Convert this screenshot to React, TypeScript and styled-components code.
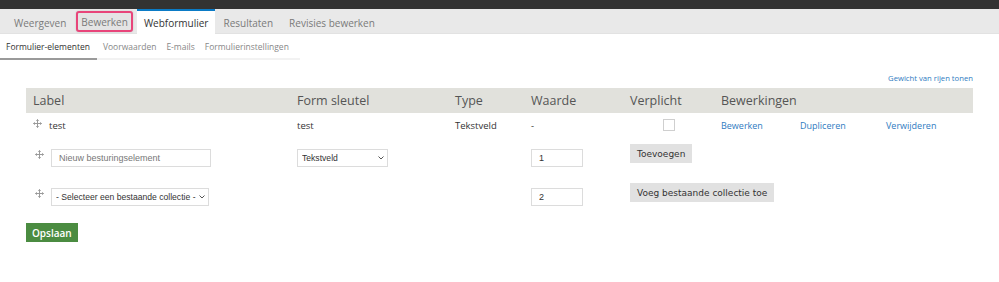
import React, { FC } from 'react';
import styled, { createGlobalStyle } from 'styled-components';

const GlobalStyle = createGlobalStyle`
  body {
    margin: 0;
    background: #fff;
    font-family: 'Open Sans', 'Liberation Sans', sans-serif;
    color: #333;
  }
`;

const TopBar = styled.div`
  height: 9px;
  background: #333;
`;

const TabBar = styled.nav`
  display: flex;
  align-items: stretch;
  height: 25px;
  padding-left: 6px;
  background: #e9e9e9;
  border-bottom: 1px solid #e2e2e2;
  box-sizing: border-box;
`;

const Tab = styled.div<{ $active?: boolean; $marked?: boolean }>`
  display: flex;
  align-items: center;
  padding: 0 ${(p) => (p.$active ? '7px' : '8px')};
  font-size: 10px;
  white-space: nowrap;
  color: ${(p) => (p.$active ? '#333' : '#7a7a7a')};
  background: ${(p) => (p.$active ? '#fff' : 'transparent')};
  border-top: 2px solid ${(p) => (p.$active ? '#0b7bc6' : 'transparent')};
  margin-bottom: -1px;
  box-sizing: border-box;
  ${(p) =>
    p.$marked &&
    `
    margin: 2px 4px 1px 2px;
    padding: 0 3px;
    border: 2px solid #e8457a;
    border-radius: 3px;
    background: #e4e4e4;
    box-shadow: 0 0 2px rgba(0,0,0,0.15);
  `}
`;

const SubTabs = styled.nav`
  display: flex;
  width: 300px;
  height: 26px;
  border-bottom: 2px solid #f2f2f2;
  box-sizing: border-box;
`;

const SubTab = styled.div<{ $active?: boolean }>`
  display: flex;
  align-items: center;
  flex-shrink: 0;
  white-space: nowrap;
  padding: 0 ${(p) => (p.$active ? '7px 0 6px' : '4px 0 6px')};
  font-size: 8.5px;
  color: ${(p) => (p.$active ? '#333' : '#888')};
  ${(p) => p.$active && `border-bottom: 2px solid #9a9a9a; margin-bottom: -2px;`}
`;

const Content = styled.main`
  padding: 0 26px;
`;

const LinkRow = styled.div`
  display: flex;
  justify-content: flex-end;
  padding-top: 13px;
  height: 28px;
  box-sizing: border-box;
`;

const Link = styled.a`
  color: #2f7bc1;
  font-size: 9px;
  text-decoration: none;
  cursor: pointer;
`;

const SmallLink = styled(Link)`
  font-size: 7.7px;
`;

const Table = styled.table`
  width: 100%;
  border-collapse: collapse;
  table-layout: fixed;
`;

const HeadCell = styled.th`
  height: 25px;
  padding: 0 7px;
  background: #e1e1dc;
  font-size: 12.5px;
  font-weight: 400;
  color: #555;
  text-align: left;
`;

const Cell = styled.td<{ $top?: number; $center?: boolean }>`
  padding: ${(p) => (p.$top ?? 6)}px 7px 0 7px;
  height: ${(p) => (p.$top ? 38 : 26)}px;
  vertical-align: top;
  font-size: 9.5px;
  color: #333;
  text-align: ${(p) => (p.$center ? 'center' : 'left')};
  box-sizing: border-box;
`;

const LabelWrap = styled.div`
  display: flex;
  align-items: flex-start;
  gap: 7px;
`;

const Handle = styled.span<{ $top?: number }>`
  display: inline-flex;
  margin-top: ${(p) => p.$top ?? 2}px;
  margin-left: 2px;
`;

const Checkbox = styled.span`
  display: inline-block;
  width: 12px;
  height: 12px;
  border: 1px solid #cfcfcf;
  box-sizing: border-box;
`;

const TextInput = styled.input<{ $width: number }>`
  width: ${(p) => p.$width}px;
  height: 18px;
  padding: 0 7px;
  border: 1px solid #dcdcdc;
  box-sizing: border-box;
  font-family: 'Liberation Sans', Arial, sans-serif;
  font-size: 9px;
  color: #333;
  &::placeholder {
    color: #777;
  }
`;

const SelectWrap = styled.div<{ $width: number }>`
  position: relative;
  width: ${(p) => p.$width}px;
`;

const Select = styled.select`
  appearance: none;
  width: 100%;
  height: 18px;
  padding: 0 4px;
  border: 1px solid #dcdcdc;
  background: #fff;
  box-sizing: border-box;
  font-family: 'Liberation Sans', Arial, sans-serif;
  font-size: 8.6px;
  color: #333;
`;

const Chevron = styled.svg`
  position: absolute;
  right: 4px;
  top: 7px;
  pointer-events: none;
`;

const GrayButton = styled.button`
  height: 19px;
  padding: 0 7px;
  border: none;
  background: #e1e1e1;
  font-family: 'DejaVu Sans', Verdana, sans-serif;
  font-size: 9px;
  color: #333;
  cursor: pointer;
`;

const SaveButton = styled.button`
  margin-top: 8px;
  height: 19px;
  padding: 0 6px;
  border: none;
  background: #4b8c41;
  color: #fff;
  font-family: 'Open Sans', sans-serif;
  font-size: 10px;
  font-weight: 600;
  cursor: pointer;
`;

const DragIcon: FC = () => (
  <svg width="9" height="9" viewBox="0 0 9 9" fill="none" stroke="#9a9a9a" strokeWidth="1">
    <path d="M4.5 0.5v8M0.5 4.5h8" />
    <path d="M3.3 1.7l1.2-1.2 1.2 1.2M3.3 7.3l1.2 1.2 1.2-1.2M1.7 3.3l-1.2 1.2 1.2 1.2M7.3 3.3l1.2 1.2-1.2 1.2" />
  </svg>
);

const Dropdown: FC<{ width: number; value: string }> = ({ width, value }) => (
  <SelectWrap $width={width}>
    <Select defaultValue={value}>
      <option>{value}</option>
    </Select>
    <Chevron width="6" height="4" viewBox="0 0 6 4" fill="none" stroke="#555" strokeWidth="1">
      <path d="M0.5 0.5l2.5 2.5 2.5-2.5" />
    </Chevron>
  </SelectWrap>
);

const tabs = ['Weergeven', 'Bewerken', 'Webformulier', 'Resultaten', 'Revisies bewerken'];
const subTabs = ['Formulier-elementen', 'Voorwaarden', 'E-mails', 'Formulierinstellingen'];

const App: FC = () => (
  <>
    <GlobalStyle />
    <TopBar />
    <TabBar>
      {tabs.map((t) => (
        <Tab key={t} $active={t === 'Webformulier'} $marked={t === 'Bewerken'}>
          {t}
        </Tab>
      ))}
    </TabBar>
    <SubTabs>
      {subTabs.map((t, i) => (
        <SubTab key={t} $active={i === 0}>
          {t}
        </SubTab>
      ))}
    </SubTabs>
    <Content>
      <LinkRow>
        <SmallLink>Gewicht van rijen tonen</SmallLink>
      </LinkRow>
      <Table>
        <colgroup>
          <col style={{ width: 264 }} />
          <col style={{ width: 158 }} />
          <col style={{ width: 76 }} />
          <col style={{ width: 99 }} />
          <col style={{ width: 91 }} />
          <col style={{ width: 79 }} />
          <col style={{ width: 86 }} />
          <col />
        </colgroup>
        <thead>
          <tr>
            <HeadCell>Label</HeadCell>
            <HeadCell>Form sleutel</HeadCell>
            <HeadCell>Type</HeadCell>
            <HeadCell>Waarde</HeadCell>
            <HeadCell>Verplicht</HeadCell>
            <HeadCell colSpan={3}>Bewerkingen</HeadCell>
          </tr>
        </thead>
        <tbody>
          <tr>
            <Cell>
              <LabelWrap>
                <DragIcon />
                <span>test</span>
              </LabelWrap>
            </Cell>
            <Cell>test</Cell>
            <Cell>Tekstveld</Cell>
            <Cell>-</Cell>
            <Cell $center>
              <Checkbox />
            </Cell>
            <Cell>
              <Link>Bewerken</Link>
            </Cell>
            <Cell>
              <Link>Dupliceren</Link>
            </Cell>
            <Cell>
              <Link>Verwijderen</Link>
            </Cell>
          </tr>
          <tr>
            <Cell $top={10}>
              <LabelWrap>
                <Handle $top={1}>
                  <DragIcon />
                </Handle>
                <TextInput $width={160} placeholder="Nieuw besturingselement" />
              </LabelWrap>
            </Cell>
            <Cell $top={10}>
              <Dropdown width={91} value="Tekstveld" />
            </Cell>
            <Cell $top={10} />
            <Cell $top={10}>
              <TextInput $width={52} defaultValue="1" />
            </Cell>
            <Cell $top={5} colSpan={4}>
              <GrayButton>Toevoegen</GrayButton>
            </Cell>
          </tr>
          <tr>
            <Cell $top={11}>
              <LabelWrap>
                <Handle $top={1}>
                  <DragIcon />
                </Handle>
                <Dropdown width={158} value="- Selecteer een bestaande collectie -" />
              </LabelWrap>
            </Cell>
            <Cell $top={11} />
            <Cell $top={11} />
            <Cell $top={11}>
              <TextInput $width={52} defaultValue="2" />
            </Cell>
            <Cell $top={6} colSpan={4}>
              <GrayButton>Voeg bestaande collectie toe</GrayButton>
            </Cell>
          </tr>
        </tbody>
      </Table>
      <SaveButton>Opslaan</SaveButton>
    </Content>
  </>
);

export default App;
